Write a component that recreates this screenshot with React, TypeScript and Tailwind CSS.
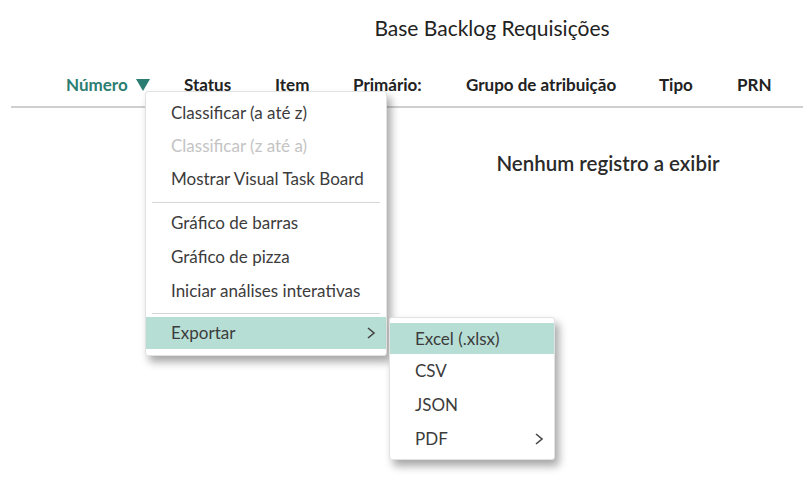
import React from "react";

const Chevron = () => (
  <svg width="10" height="14" viewBox="0 0 10 14" className="text-[#444]">
    <polyline points="2,2 8,7 2,12" fill="none" stroke="currentColor" strokeWidth="1.6" />
  </svg>
);

const Item = ({ children, disabled = false, active = false, h = "h-[33px]" }: { children: React.ReactNode; disabled?: boolean; active?: boolean; h?: string }) => (
  <div className={`${h} flex items-center pl-[25px] pr-[10px] ${disabled ? "text-[#c4c4c4]" : "text-[#3c3c3c]"} ${active ? "bg-[#b7ded5]" : ""}`}>
    {children}
  </div>
);

export default function App() {
  return (
    <div className="relative w-[803px] h-[485px] bg-white overflow-hidden" style={{ fontFamily: "Lato, 'Open Sans', sans-serif" }}>
      <div className="pl-[181px] pt-[15px] flex justify-center text-[21px] text-[#222] leading-[26px]">
        Base Backlog Requisições
      </div>
      <div className="mt-[34px] flex pl-[66px] text-[17px] font-bold text-[#222] leading-[20px]">
        <div className="w-[118px] text-[#2b7d71] flex items-center">
          Número
          <svg width="14" height="12" viewBox="0 0 14 12" className="ml-[8px]">
            <polygon points="0,0 14,0 7,12" fill="#2b7d71" />
          </svg>
        </div>
        <div className="w-[91px]">Status</div>
        <div className="w-[78px]">Item</div>
        <div className="w-[113px]">Primário:</div>
        <div className="w-[193px]">Grupo de atribuição</div>
        <div className="w-[78px]">Tipo</div>
        <div>PRN</div>
      </div>
      <div className="ml-[11px] mt-[11px] h-[2px] bg-[#cfcfcf]" />
      <div className="pl-[413px] mt-[40px] flex justify-center text-[20.5px] font-semibold text-[#2a2a2a]">
        Nenhum registro a exibir
      </div>

      <div className="absolute left-[145px] top-[91px] w-[242px] bg-white border border-[#e2e2e2] rounded-[3px] shadow-[4px_6px_8px_rgba(0,0,0,0.35)] pt-[4px] pb-[6px] text-[17px]">
        <Item>Classificar (a até z)</Item>
        <Item disabled>Classificar (z até a)</Item>
        <Item>Mostrar Visual Task Board</Item>
        <div className="mx-[6px] mt-[7px] mb-[3px] h-px bg-[#d6d6d6]" />
        <Item h="h-[34px]">Gráfico de barras</Item>
        <Item h="h-[34px]">Gráfico de pizza</Item>
        <Item h="h-[34px]">Iniciar análises interativas</Item>
        <div className="mx-[6px] mt-[5px] mb-[3px] h-px bg-[#d6d6d6]" />
        <Item active h="h-[32px]">
          <span className="flex-1">Exportar</span>
          <Chevron />
        </Item>
      </div>

      <div className="absolute left-[389px] top-[317px] w-[166px] bg-white border border-[#e2e2e2] rounded-[3px] shadow-[4px_6px_8px_rgba(0,0,0,0.35)] pt-[5px] pb-[3px] text-[17px]">
        <Item active h="h-[31px]">Excel (.xlsx)</Item>
        <Item h="h-[34px]">CSV</Item>
        <Item h="h-[34px]">JSON</Item>
        <Item h="h-[34px]">
          <span className="flex-1">PDF</span>
          <Chevron />
        </Item>
      </div>
    </div>
  );
}
